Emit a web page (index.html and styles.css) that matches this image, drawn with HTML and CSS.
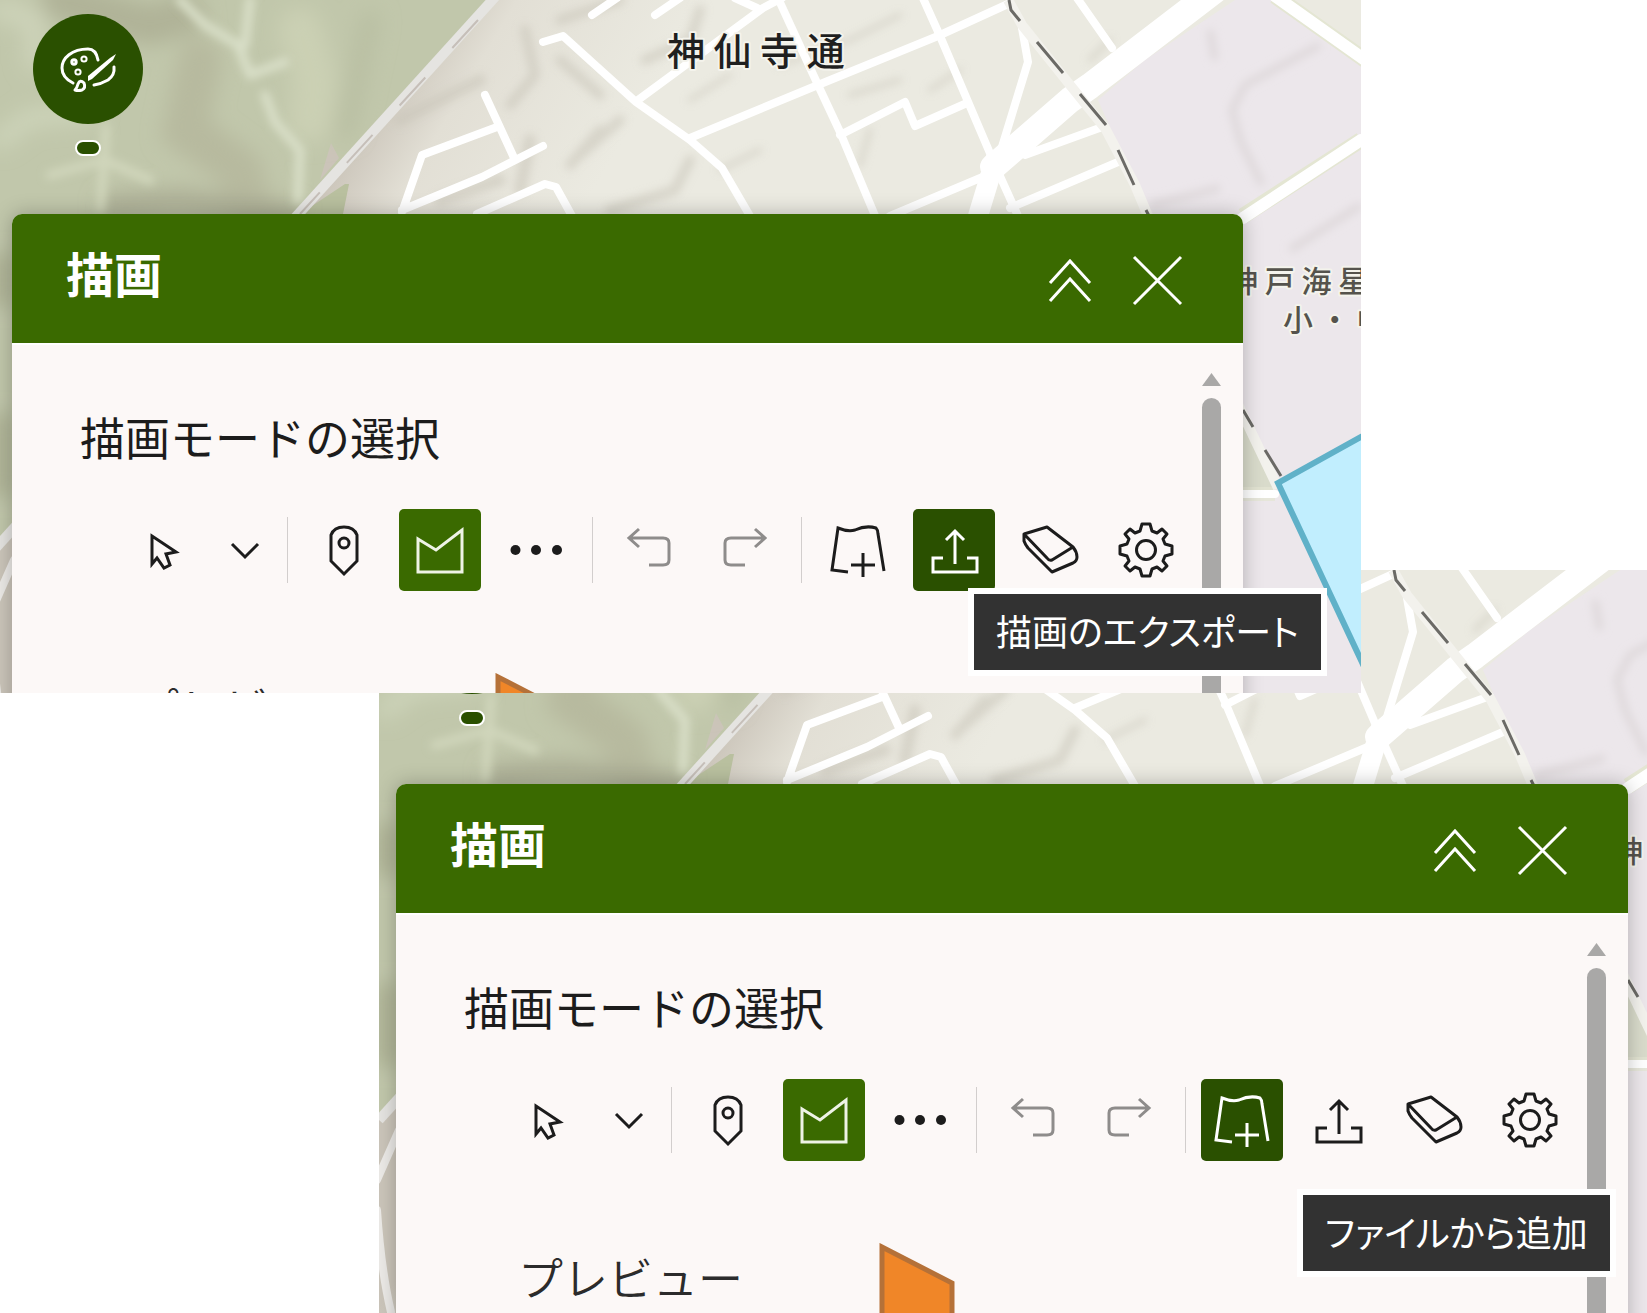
FILE: index.html
```html
<!DOCTYPE html>
<html lang="ja">
<head>
<meta charset="utf-8">
<title>描画</title>
<meta name="viewport" content="width=device-width, initial-scale=1">
<link rel="stylesheet" href="styles.css">
</head>
<body>
<svg class="sprite" aria-hidden="true">
  <defs>
    <filter id="soft" x="-20%" y="-20%" width="140%" height="140%"><feGaussianBlur stdDeviation="10"/></filter>
    <filter id="fine" x="-20%" y="-20%" width="140%" height="140%"><feGaussianBlur stdDeviation="4"/></filter>
    <linearGradient id="slope" gradientUnits="userSpaceOnUse" x1="400" y1="60" x2="600" y2="180">
      <stop offset="0" stop-color="#cbc5ba"/><stop offset="0.3" stop-color="#e2dfd5"/><stop offset="1" stop-color="#ebeae1"/>
    </linearGradient>
  </defs>

  <symbol id="basemap" overflow="visible">
    <rect x="-10" y="0" width="2400" height="1600" fill="url(#slope)"/>
    <path d="M-10 0H490L-10 549Z" fill="#c1c7ab"/>
    <path d="M345 184L349 184 343 214H300Z" fill="#b9c09f"/>
    <path d="M331 143L339 158 320 180Z" fill="#cbc4b9"/>
    <g fill="none" stroke-linecap="round" filter="url(#soft)">
      <path d="M60 0L150 25 185 15" stroke="#b0b398" stroke-width="40"/>
      <path d="M0 10L35 20 35 60" stroke="#cdd3b9" stroke-width="22"/>
      <path d="M0 140L30 118 90 112" stroke="#cdd4ba" stroke-width="18"/>
      <path d="M200 60L185 130 240 170 250 205" stroke="#b7ba9f" stroke-width="44"/>
      <path d="M110 205L180 200 290 214" stroke="#abad94" stroke-width="22"/>
      <path d="M300 30L315 80 310 120" stroke="#cbd0b4" stroke-width="44"/>
      <path d="M370 20L355 90 345 130" stroke="#b9bfa3" stroke-width="20"/>
      <path d="M2 260V300M2 420V490" stroke="#a4a88a" stroke-width="16"/>
    </g>
    <g fill="none" stroke-linecap="round" stroke-linejoin="round" filter="url(#fine)">
      <path d="M180 0L205 25 238 45 250 75 285 62M250 0L245 45M265 95L275 122 300 150 298 200" stroke="#d9dfc8" stroke-width="9"/>
      <path d="M106 128L104 160 100 210M104 160L150 180M104 160L50 175" stroke="#d0d6bb" stroke-width="9"/>
    </g>
    <g fill="none" stroke="#c8c4b8" stroke-linecap="round" stroke-linejoin="round" opacity=".55" filter="url(#fine)">
      <path d="M525 30L535 75 510 105M560 60L600 95M620 120L580 155M700 10L690 40 645 60M620 0L560 20M570 165L600 130M690 160L675 190 610 210" stroke-width="10"/>
      <path d="M730 75L690 100M780 65L850 40 900 15M850 95L900 80M870 130L860 165M960 70L930 90M1090 60L1110 40M760 150L720 170" stroke-width="5"/>
      <path d="M400 120L480 80M440 200L500 180M520 190L530 140" stroke-width="12"/>
    </g>
    <path d="M1098 100L1145 60 1235 0H1275L1361 60V0H2400V1600H1243V490L1275 490 1243 420 1148 214Z" fill="#ece7eb"/>
    <path d="M1243 425L1275 490H1243Z" fill="#d9dbcb"/>
    <path d="M1275 0L1370 66V0Z" fill="#ebeae1"/>
    <path d="M1210 30L1215 60M1320 45L1245 85 1232 110 1240 140 1262 185M1361 205L1290 250M1150 205L1220 188" fill="none" stroke="#ded8da" stroke-width="7" filter="url(#fine)"/>

    <g fill="none" stroke-linejoin="round">
      <path d="M1361 140L1243 216M1275 -4L1368 62" stroke="#e4e6d3" stroke-width="16"/>
      <path d="M1225 -10L1090 85M1275 494H1240" stroke="#e4e6d3" stroke-width="14" opacity=".7"/>
    </g>
    <g fill="none" stroke="#fff" stroke-width="8" stroke-linecap="round" stroke-linejoin="round">
      <path d="M543 42L563 36 636 102 690 140 722 168 750 216"/>
      <path d="M592 15L617 -2M655 15L680 -2M638 100L763 8 782 -2M735 -2L757 8"/>
      <path d="M690 138L818 85 938 36 1008 4"/>
      <path d="M777 -4L818 85 840 132 876 218M840 135L905 102 915 126 967 103"/>
      <path d="M922 -4L940 36 995 165 1018 216"/>
      <path d="M485 95L515 160M402 212L422 155 497 127M402 210L482 177 543 146M477 214L545 184 556 187 572 216"/>
      <path d="M1077 -2L1112 48M1022 28L1028 62 998 160M1025 155L1105 126M1010 208L1118 162M890 216L985 176"/>
      <path d="M1243 494H1275"/>
      <path d="M1361 140L1243 218M1275 -4L1368 62" stroke-width="12"/>
      <path d="M1218 -12L1090 86 1070 100 993 167" stroke-width="26"/>
      <path d="M995 160L978 216" stroke-width="20"/>
      <path d="M-8 640Q-4 700 6 742M-8 610L14 560" stroke="#eceae7"/>
    </g>
    <path d="M1008 0L1022 25 1070 85 1105 128 1135 185 1148 216 1278 488" fill="none" stroke="#f3f2ed" stroke-width="10"/>
    <path d="M1009 0L1011 10 1020 21M1037 42L1063 73M1080 94L1106 125M1118 150L1134 185M1146 210L1149 216M1243 410L1253 427M1265 450L1281 476" fill="none" stroke="#6b6a66" stroke-width="3"/>
    <path d="M496 -4L-6 550" fill="none" stroke="#e5e4e1" stroke-width="10"/>
    <path d="M478 20L300 214" fill="none" stroke="#c6bfb9" stroke-width="2" stroke-dasharray="38 40"/>
    <path d="M1420 404L1278 483 1375 690 1480 690Z" fill="#c1eefe" stroke="#60b1c8" stroke-width="6"/>
  </symbol>

  <symbol id="i-palette" viewBox="-30 -30 60 60">
    <g fill="none" stroke="currentColor" stroke-width="3" stroke-linecap="round" stroke-linejoin="round">
      <path d="M10-9Q8-20 0-20C-16-20-26-11-26-1C-26 6-21 11-15 14M26-2Q27 6 20 11Q13 15 6 16"/>
      <circle cx="-4" cy="-10" r="2.6" stroke-width="2"/><circle cx="-14" cy="-7" r="2.2"/><circle cx="-10" cy="3" r="2.6" stroke-width="2"/>
      <path d="M-13 21Q-11 19-10 15Q-8 10-4 14Q-2 19-6 21Q-10 22-13 21Z"/>
    </g>
    <path d="M28-15L25-9 4 10 0 12 0 7 22-11Z" fill="currentColor"/>
  </symbol>
  <symbol id="i-collapse" viewBox="-30 -30 60 60"><path d="M-21 3L-1-19 19 3M-21 21L-1-1 19 21" fill="none" stroke="currentColor" stroke-width="3"/></symbol>
  <symbol id="i-close" viewBox="-30 -30 60 60"><path d="M-25-23L22 24M22-23L-25 24" fill="none" stroke="currentColor" stroke-width="3"/></symbol>
  <symbol id="i-cursor" viewBox="-30 -30 60 60"><path d="M-11-14V14L-6 8L1 18L7 15L3 4L13 2Z" fill="none" stroke="currentColor" stroke-width="3"/></symbol>
  <symbol id="i-down" viewBox="-30 -30 60 60"><path d="M-16-6L-3 7L10-6" fill="none" stroke="currentColor" stroke-width="3"/></symbol>
  <symbol id="i-pin" viewBox="-30 -30 60 60"><g fill="none" stroke="currentColor" stroke-width="3"><path d="M-13-15Q-10-23 0-23Q10-23 13-15V11L0 24L-13 11Z"/><circle cx="0" cy="-7" r="5"/></g></symbol>
  <symbol id="i-polygon" viewBox="-30 -30 60 60"><path d="M-22-11L-4 0L22-20V22H-22Z" fill="none" stroke="currentColor" stroke-width="3"/></symbol>
  <symbol id="i-more" viewBox="-30 -30 60 60"><g fill="currentColor"><circle cx="-20.500" cy="0" r="5"/><circle cx="0" cy="0" r="5"/><circle cx="21" cy="0" r="5"/></g></symbol>
  <symbol id="i-undo" viewBox="-30 -30 60 60"><path d="M-20-12H14Q20-12 20-7V10Q20 15 14 15H0M-10-21L-20-12L-10-3" fill="none" stroke="currentColor" stroke-width="3"/></symbol>
  <symbol id="i-redo" viewBox="-30 -30 60 60"><path d="M20-12H-14Q-20-12-20-7V10Q-20 15-14 15H0M10-21L20-12L10-3" fill="none" stroke="currentColor" stroke-width="3"/></symbol>
  <symbol id="i-addfile" viewBox="-30 -30 60 60"><path d="M-10 22L-26 20L-20-22Q-10-18-3-20Q8-25 18-22Q20-20 20-16L26 21M5 3V27M-7 15H17" fill="none" stroke="currentColor" stroke-width="3"/></symbol>
  <symbol id="i-export" viewBox="-30 -30 60 60"><path d="M1 14V-19M-8-10L1-19L10-10M-11 8H-21V22H23V8H13" fill="none" stroke="currentColor" stroke-width="3"/></symbol>
  <symbol id="i-eraser" viewBox="-30 -30 60 60"><path d="M-26-16L-3-23L23-3L2 10Q-1 11-3 8L-26-16V-9Q-25-6-22-2L2 22L23 13Q27 11 27 7Q27 2 23-3" fill="none" stroke="currentColor" stroke-width="3" stroke-linejoin="round"/></symbol>
  <symbol id="i-gear" viewBox="-30 -30 60 60"><g fill="none" stroke="currentColor" stroke-width="3" stroke-linejoin="round"><path d="M-4-26H4L6-19 11-17 16-21 21-16 17-11 19-6 26-4V4L19 6 17 11 21 16 16 21 11 17 6 19 4 26H-4L-6 19-11 17-16 21-21 16-17 11-19 6-26 4V-4L-19-6-17-11-21-16-16-21-11-17-6-19Z"/><circle cx="0" cy="0" r="9.5"/></g></symbol>
  <symbol id="i-shape" viewBox="0 0 80 160"><path d="M3 4L73 40V156H3Z" fill="#f08628" stroke="#b57138" stroke-width="5"/></symbol>
</svg>

<main class="board">
  <section class="scene scene-export" aria-label="描画のエクスポート">
    <svg class="map" aria-hidden="true">
      <use href="#basemap"/>
      <text class="place" x="667" y="65">神 仙 寺 通</text>
      <text class="poi" x="1228" y="292">神 戸 海 星</text>
      <text class="poi" x="1283" y="331">小 ・ 中</text>
    </svg>
    <div class="launcher">
      <button class="launch" type="button" aria-label="描画"><svg class="icon"><use href="#i-palette"/></svg></button>
      <span class="pill"></span>
    </div>
    <div class="panel">
      <header class="panel-head">
        <h2 class="panel-title">描画</h2>
        <button class="head-btn" type="button" aria-label="折りたたむ"><svg class="icon"><use href="#i-collapse"/></svg></button>
        <button class="head-btn" type="button" aria-label="閉じる"><svg class="icon"><use href="#i-close"/></svg></button>
      </header>
      <div class="panel-body">
        <div class="content">
          <h3 class="mode-title">描画モードの選択</h3>
          <div class="toolbar" role="toolbar">
            <button class="tool" type="button" aria-label="選択"><svg class="icon"><use href="#i-cursor"/></svg></button>
            <button class="tool narrow" type="button" aria-label="選択オプション"><svg class="icon"><use href="#i-down"/></svg></button>
            <span class="rule"></span>
            <button class="tool" type="button" aria-label="ポイント"><svg class="icon"><use href="#i-pin"/></svg></button>
            <button class="tool on" type="button" aria-label="ポリゴン"><svg class="icon"><use href="#i-polygon"/></svg></button>
            <button class="tool" type="button" aria-label="その他"><svg class="icon"><use href="#i-more"/></svg></button>
            <span class="rule"></span>
            <button class="tool" type="button" aria-label="元に戻す" disabled><svg class="icon"><use href="#i-undo"/></svg></button>
            <button class="tool" type="button" aria-label="やり直し" disabled><svg class="icon"><use href="#i-redo"/></svg></button>
            <span class="rule"></span>
            <button class="tool" type="button" aria-label="ファイルから追加"><svg class="icon"><use href="#i-addfile"/></svg></button>
            <div class="tip-anchor">
              <button class="tool hover" type="button" aria-describedby="tip-export" aria-label="エクスポート"><svg class="icon"><use href="#i-export"/></svg></button>
              <span class="tip tip-export" id="tip-export" role="tooltip">描画のエクスポート</span>
            </div>
            <button class="tool" type="button" aria-label="消去"><svg class="icon"><use href="#i-eraser"/></svg></button>
            <button class="tool" type="button" aria-label="設定"><svg class="icon"><use href="#i-gear"/></svg></button>
          </div>
          <div class="preview">
            <span class="preview-label">プレビュー</span>
            <svg class="preview-shape" aria-hidden="true"><use href="#i-shape"/></svg>
          </div>
        </div>
        <div class="scroll" aria-hidden="true"><span class="scroll-up"></span><span class="scroll-thumb"></span></div>
      </div>
    </div>
  </section>

  <section class="scene scene-add" aria-label="ファイルから追加">
    <svg class="map" aria-hidden="true">
      <g transform="translate(6 0)">
        <use href="#basemap"/>
        <text class="poi" x="1228" y="292">神</text>
      </g>
    </svg>
    <div class="launcher">
      <button class="launch" type="button" aria-label="描画"><svg class="icon"><use href="#i-palette"/></svg></button>
      <span class="pill"></span>
    </div>
    <div class="panel">
      <header class="panel-head">
        <h2 class="panel-title">描画</h2>
        <button class="head-btn" type="button" aria-label="折りたたむ"><svg class="icon"><use href="#i-collapse"/></svg></button>
        <button class="head-btn" type="button" aria-label="閉じる"><svg class="icon"><use href="#i-close"/></svg></button>
      </header>
      <div class="panel-body">
        <div class="content">
          <h3 class="mode-title">描画モードの選択</h3>
          <div class="toolbar" role="toolbar">
            <button class="tool" type="button" aria-label="選択"><svg class="icon"><use href="#i-cursor"/></svg></button>
            <button class="tool narrow" type="button" aria-label="選択オプション"><svg class="icon"><use href="#i-down"/></svg></button>
            <span class="rule"></span>
            <button class="tool" type="button" aria-label="ポイント"><svg class="icon"><use href="#i-pin"/></svg></button>
            <button class="tool on" type="button" aria-label="ポリゴン"><svg class="icon"><use href="#i-polygon"/></svg></button>
            <button class="tool" type="button" aria-label="その他"><svg class="icon"><use href="#i-more"/></svg></button>
            <span class="rule"></span>
            <button class="tool" type="button" aria-label="元に戻す" disabled><svg class="icon"><use href="#i-undo"/></svg></button>
            <button class="tool" type="button" aria-label="やり直し" disabled><svg class="icon"><use href="#i-redo"/></svg></button>
            <span class="rule"></span>
            <div class="tip-anchor">
              <button class="tool hover" type="button" aria-describedby="tip-add" aria-label="追加"><svg class="icon"><use href="#i-addfile"/></svg></button>
              <span class="tip tip-add" id="tip-add" role="tooltip">ファイルから追加</span>
            </div>
            <button class="tool" type="button" aria-label="エクスポート"><svg class="icon"><use href="#i-export"/></svg></button>
            <button class="tool" type="button" aria-label="消去"><svg class="icon"><use href="#i-eraser"/></svg></button>
            <button class="tool" type="button" aria-label="設定"><svg class="icon"><use href="#i-gear"/></svg></button>
          </div>
          <div class="preview">
            <span class="preview-label">プレビュー</span>
            <svg class="preview-shape" aria-hidden="true"><use href="#i-shape"/></svg>
          </div>
        </div>
        <div class="scroll" aria-hidden="true"><span class="scroll-up"></span><span class="scroll-thumb"></span></div>
      </div>
    </div>
  </section>
</main>
</body>
</html>
```
FILE: styles.css
```css
:root {
  --green: #3a6a00;
  --green-dark: #2a5000;
  --panel: #fcf8f7;
  --ink: #1c1c1c;
}

* { box-sizing: border-box; }

body {
  margin: 0;
  background: #fff;
  color: var(--ink);
  font-family: "Noto Sans CJK JP", "Noto Sans", sans-serif;
}

button {
  padding: 0;
  border: 0;
  background: none;
  color: inherit;
  font: inherit;
  cursor: pointer;
}

.sprite {
  position: absolute;
  width: 0;
  height: 0;
}

/* Two overlapping views of the same widget */
.board {
  display: grid;
  grid-template-columns: 379fr 982fr 286fr;
  grid-template-rows: 570fr 123fr 620fr;
  height: 100vh;
}

.scene {
  position: relative;
  min-width: 0;
  min-height: 0;
  overflow: hidden;
  padding: 14px 118px 0 12px;
}

.scene-export {
  grid-area: 1 / 1 / 3 / 3;
  z-index: 2;
}

.scene-add {
  grid-area: 2 / 2 / 4 / 4;
  padding: 14px 19px 0 17px;
}

.map {
  position: absolute;
  inset: 0;
  width: 100%;
  height: 100%;
}

.place, .poi {
  paint-order: stroke;
  stroke: #f4f3ec;
  stroke-width: 4px;
  stroke-linejoin: round;
  font-weight: 500;
}

.place {
  fill: #1f1f1f;
  font-size: 38px;
}

.poi {
  fill: #55534c;
  font-size: 30px;
}

.launcher {
  position: relative;
  display: flex;
  flex-direction: column;
  align-items: center;
  gap: 16px;
  width: 110px;
  height: 200px;
  margin-left: 21px;
}

.launch {
  display: grid;
  place-items: center;
  flex: none;
  width: 110px;
  height: 110px;
  border-radius: 50%;
  background: var(--green-dark);
  color: #fff;
}

.pill {
  width: 26px;
  height: 16px;
  border: 2px solid #fff;
  border-radius: 8px;
  background: var(--green-dark);
}

.icon {
  display: block;
  width: 60px;
  height: 60px;
}

.panel {
  position: relative;
  border-radius: 10px 10px 0 0;
  background: var(--panel);
  box-shadow: 0 0 20px rgba(0, 0, 0, 0.25);
}

.panel-head {
  display: flex;
  align-items: center;
  gap: 28px;
  height: 129px;
  padding: 2px 54px 0;
  border-radius: 10px 10px 0 0;
  background: var(--green);
  color: #fff;
}

.panel-title {
  flex: 1;
  margin: 0;
  padding-bottom: 16px;
  font-size: 48px;
  font-weight: 700;
  line-height: 56px;
}

.head-btn { width: 60px; }

.panel-body {
  display: flex;
  height: 700px;
  padding: 28px 22px 0 0;
  border-top: 2px solid #fff;
}

.content {
  flex: 1;
  min-width: 0;
}

.mode-title {
  margin: 0;
  padding: 32px 0 40px 68px;
  font-size: 45px;
  font-weight: 400;
  line-height: 64px;
}

.toolbar {
  display: flex;
  align-items: center;
  gap: 14px;
  padding-left: 110px;
}

.tool {
  display: grid;
  place-items: center;
  flex: none;
  width: 82px;
  height: 82px;
  border-radius: 5px;
}

.tool.narrow { width: 54px; }
.tool.on { background: var(--green); color: #eef3e6; }
.tool.hover { background: var(--green-dark); color: #fff; }
.tool:disabled { color: #8e8c8b; cursor: default; }

.rule {
  width: 1px;
  height: 66px;
  margin: 0 1px;
  background: #d2cecd;
}

.tip-anchor { position: relative; }

.tip {
  position: absolute;
  z-index: 5;
  padding: 4px 22px 8px;
  border: 6px solid #fff;
  background: #323232;
  color: #fff;
  font-size: 36px;
  line-height: 64px;
  white-space: nowrap;
  font-feature-settings: "palt";
}

.tip-export { top: 79px; left: 55px; }
.tip-add { top: 110px; left: 96px; }

.preview {
  display: flex;
  align-items: flex-start;
  padding: 82px 0 0 122px;
}

.preview-label {
  width: 361px;
  padding-top: 2px;
  color: #2b2b2b;
  font-size: 45px;
  font-weight: 350;
  line-height: 64px;
}

.preview-shape {
  width: 80px;
  height: 160px;
}

.scroll {
  display: flex;
  flex-direction: column;
  gap: 12px;
  width: 19px;
}

.scroll-up {
  height: 13px;
  background: #a9a8a7;
  clip-path: polygon(50% 0, 100% 100%, 0 100%);
}

.scroll-thumb {
  flex: 1;
  border-radius: 10px;
  background: #a9a8a7;
}
```
